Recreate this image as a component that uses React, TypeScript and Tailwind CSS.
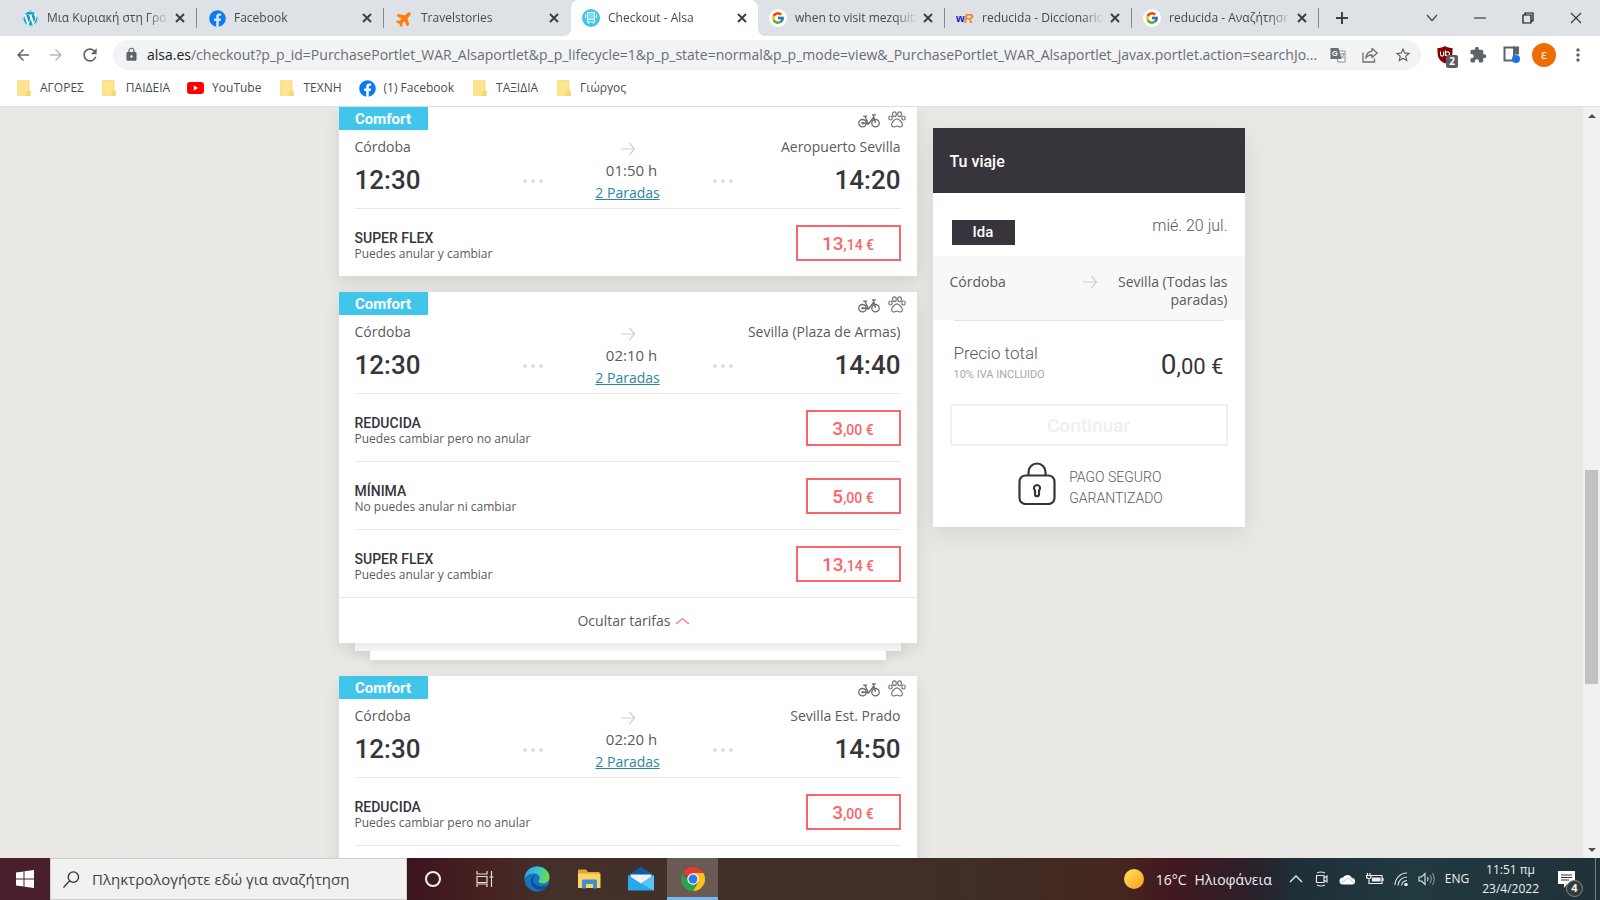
/**
 * App.tsx
 * Desktop view of the ALSA checkout: browser chrome on top, the list of
 * journeys with the trip summary in the middle, Windows taskbar below.
 */

import { useState, type ReactNode } from 'react';
import { FcGoogle } from 'react-icons/fc';
import { FaFacebook, FaPlane, FaWordpress } from 'react-icons/fa';
import { MdArrowBack, MdArrowForward, MdExtension, MdLock, MdMoreVert, MdRefresh, MdStarOutline } from 'react-icons/md';

interface Fare {
  name: string;
  note: string;
  euros: string;
  cents: string;
}

interface Journey {
  id: string;
  destination: string;
  arrival: string;
  duration: string;
  fares: Fare[];
  footer?: boolean;
}

const REDUCIDA: Fare = { name: 'REDUCIDA', note: 'Puedes cambiar pero no anular', euros: '3', cents: '00' };
const MINIMA: Fare = { name: 'MÍNIMA', note: 'No puedes anular ni cambiar', euros: '5', cents: '00' };
const SUPER_FLEX: Fare = { name: 'SUPER FLEX', note: 'Puedes anular y cambiar', euros: '13', cents: '14' };

const JOURNEYS: Journey[] = [
  { id: 'a', destination: 'Aeropuerto Sevilla', arrival: '14:20', duration: '01:50 h', fares: [SUPER_FLEX] },
  {
    id: 'b',
    destination: 'Sevilla (Plaza de Armas)',
    arrival: '14:40',
    duration: '02:10 h',
    fares: [REDUCIDA, MINIMA, SUPER_FLEX],
    footer: true,
  },
  {
    id: 'c',
    destination: 'Sevilla Est. Prado',
    arrival: '14:50',
    duration: '02:20 h',
    fares: [REDUCIDA, MINIMA, SUPER_FLEX],
    footer: true,
  },
];

/* ---------- Small drawings ---------- */

function Cross() {
  return (
    <svg viewBox="0 0 10 10" className="size-[10px]" stroke="#3c4043" strokeWidth="2">
      <path d="M1 1l8 8M9 1L1 9" />
    </svg>
  );
}

function ThinArrow() {
  return (
    <svg viewBox="0 0 16 14" className="h-[14px] w-4" fill="none" stroke="#cfcfcf" strokeWidth="1.2">
      <path d="M1 7h13.5M9.5 1l5 6-5 6" />
    </svg>
  );
}

function BusIcon() {
  return (
    <svg viewBox="0 0 18 18" className="size-[18px]">
      <circle cx="9" cy="9" r="9" fill="#3fc6ea" />
      <path d="M5.500 3.500h7v7h-7z" fill="#7fd9f1" />
      <path d="M5.500 3.500h7v9.500h-7zM5.500 10.500h7M6.500 13v2M11.500 13v2M3.500 5.500V9M14.500 5.500V9" fill="none" stroke="#e4f8fd" strokeWidth="1.100" />
    </svg>
  );
}

function WordReferenceIcon() {
  return (
    <svg viewBox="0 0 18 18" className="size-[18px]" fontFamily="Liberation Sans" fontWeight="bold">
      <text x="0" y="13" fontSize="11" fill="#1414dc">w</text>
      <text x="8" y="14" fontSize="13" fontStyle="italic" fill="#f08a1d">R</text>
    </svg>
  );
}

function FolderIcon() {
  return (
    <svg viewBox="0 0 14 16" className="h-4 w-[14px]">
      <path d="M1 .5h11v15H1a1 1 0 0 1-1-1v-13a1 1 0 0 1 1-1z" fill="#ffe48f" stroke="#f3d26c" strokeWidth=".6" />
      <path d="M11 10.500c2 0 2.500.8 2.500 2.500v2.500H10v-4z" fill="#ffdc72" stroke="#eec65c" strokeWidth=".6" />
    </svg>
  );
}

function YoutubeIcon() {
  return (
    <svg viewBox="0 0 17 12" className="h-3 w-[17px]">
      <rect width="17" height="12" rx="3" fill="#f00" />
      <path d="M6.800 3.500v5l4.300-2.500z" fill="#fff" />
    </svg>
  );
}

function BikeIcon() {
  return (
    <svg viewBox="0 0 22 14" className="h-[14px] w-[22px]" fill="none" stroke="#6d6a6f" strokeWidth="1.300">
      <circle cx="4.500" cy="9.200" r="3.700" />
      <circle cx="17.500" cy="9.200" r="3.700" />
      <circle cx="4.500" cy="9.200" r=".6" />
      <path d="M5 9l5.500 1L15.500 3.500M10.500 10L7 2.500M5.200 2.200h4M14 .8h4M15.200 .8L17.500 9M8 5.500l2.500 4.500" />
    </svg>
  );
}

function PawIcon() {
  return (
    <svg viewBox="0 0 18 17" className="h-[17px] w-[18px]" fill="none" stroke="#7a777c" strokeWidth="1.200">
      <ellipse cx="6.400" cy="3.200" rx="1.900" ry="2.400" />
      <ellipse cx="11.600" cy="3.200" rx="1.900" ry="2.400" />
      <ellipse cx="2.500" cy="7" rx="1.700" ry="2" />
      <ellipse cx="15.500" cy="7" rx="1.700" ry="2" />
      <path d="M9 7.800c-2.600 0-3.200 2-4.400 3.300C3 12.800 3.300 15.800 5.600 16c1.400.1 2-.9 3.400-.9s2 1 3.400.9c2.300-.2 2.600-3.200 1-4.900C12.200 9.800 11.600 7.800 9 7.800z" />
    </svg>
  );
}

function PadlockIcon() {
  return (
    <svg viewBox="0 0 38 43" className="h-[43px] w-[38px]" fill="none" stroke="#38343b" strokeWidth="2.200">
      <rect x="1.500" y="13.500" width="35" height="28.500" rx="6" />
      <path d="M10.500 13.500V10a8.500 8.500 0 0 1 17 0v3.500" />
      <path d="M19 23a3.200 3.200 0 0 0-2 5.600v3.600a2 2 0 0 0 4 0v-3.600a3.200 3.200 0 0 0-2-5.600z" />
    </svg>
  );
}

function TranslateIcon() {
  return (
    <svg viewBox="0 0 16 16" className="size-4">
      <path d="M6 4h9v11H8z" fill="#fff" stroke="#8b8e92" />
      <path d="M.5 1h8l3 11h-11z" fill="#6b6e72" />
      <text x="2" y="9" fontSize="7.500" fontWeight="bold" fill="#fff" fontFamily="Liberation Sans">G</text>
      <path d="M9.500 7h5M12 6v1M10.500 11.500c2-1 3-2.500 3.200-4.500M11 8.500l3 3" fill="none" stroke="#777" strokeWidth=".8" />
    </svg>
  );
}

function ShareIcon() {
  return (
    <svg viewBox="0 0 16 16" className="size-4" fill="none" stroke="#6b6e72" strokeWidth="1.300">
      <path d="M1 5.500V15h11.500v-3.500" />
      <path d="M10 1.500l5.200 4.500L10 10.500V8C7 8 5 9 3.800 11.200 4.200 7.500 6 4.600 10 4.100z" strokeLinejoin="round" />
    </svg>
  );
}

/* ---------- Browser chrome ---------- */

interface TabProps {
  icon: ReactNode;
  title: string;
  active?: boolean;
  separator?: boolean;
}

function Tab({ icon, title, active, separator }: TabProps) {
  return (
    <div
      className={
        active
          ? 'relative flex h-9 w-[187px] min-w-0 items-center rounded-t-lg bg-white pr-[6px] pl-[11px] before:absolute before:bottom-0 before:-left-2 before:size-2 before:bg-[radial-gradient(circle_at_0_0,transparent_8px,white_8px)] after:absolute after:-right-2 after:bottom-0 after:size-2 after:bg-[radial-gradient(circle_at_100%_0,transparent_8px,white_8px)]'
          : 'flex h-9 w-[187px] min-w-0 items-center pl-[11px]'
      }
    >
      <button className="flex min-w-0 flex-1 items-center gap-2 text-left">
        <span className="flex w-[18px] shrink-0 justify-center">{icon}</span>
        <span className="flex-1 overflow-hidden [mask-image:linear-gradient(to_right,black_100px,transparent_122px)] text-[12px] whitespace-nowrap text-[#45494d]">
          {title}
        </span>
      </button>
      <button aria-label="Close tab" className="flex w-5 shrink-0 justify-center">
        <Cross />
      </button>
      {!active && <span className={separator ? 'ml-[6px] h-5 w-px bg-[#85888c]' : 'ml-[6px] h-5 w-px'} />}
    </div>
  );
}

function TabStrip() {
  const google = (
    <span className="flex size-[18px] items-center justify-center rounded-full bg-white">
      <FcGoogle className="size-[14px]" />
    </span>
  );

  return (
    <div className="flex h-9 items-center bg-[#dee1e6] pl-[10px]">
      <Tab icon={<FaWordpress className="size-[17px] rounded-full bg-white text-[#1e9bc9]" />} title="Μια Κυριακή στη Γρα" separator />
      <Tab icon={<FaFacebook className="size-[17px] text-[#0b7cf0]" />} title="Facebook" separator />
      <Tab icon={<FaPlane className="size-[17px] -rotate-45 text-[#ff7a0f]" />} title="Travelstories" />
      <Tab icon={<BusIcon />} title="Checkout - Alsa" active />
      <Tab icon={google} title="when to visit mezquita" separator />
      <Tab icon={<WordReferenceIcon />} title="reducida - Diccionario" separator />
      <Tab icon={google} title="reducida - Αναζήτησr" separator />
      <button aria-label="New tab" className="ml-4">
        <svg viewBox="0 0 14 14" className="size-[14px]" stroke="#3c4043" strokeWidth="2">
          <path d="M7 1v12M1 7h12" />
        </svg>
      </button>
      <div className="ml-auto flex h-8 items-center">
        <button aria-label="Search tabs" className="flex w-12 justify-center">
          <svg viewBox="0 0 12 8" className="h-2 w-3" fill="none" stroke="#444" strokeWidth="1.200"><path d="M1 1l5 5.500L11 1" /></svg>
        </button>
        <button aria-label="Minimize" className="flex w-12 justify-center">
          <svg viewBox="0 0 12 2" className="h-[2px] w-3"><path d="M0 1h12" stroke="#222" /></svg>
        </button>
        <button aria-label="Restore" className="flex w-12 justify-center">
          <svg viewBox="0 0 12 12" className="size-3" fill="none" stroke="#111" strokeWidth="1.200"><path d="M1 3h8v8H1zM3 3V1h8v8H9" /></svg>
        </button>
        <button aria-label="Close window" className="flex w-12 justify-center">
          <svg viewBox="0 0 12 12" className="size-3" stroke="#333" strokeWidth="1.100"><path d="M1 1l10 10M11 1L1 11" /></svg>
        </button>
      </div>
    </div>
  );
}

function Toolbar() {
  return (
    <div className="flex h-[37px] items-center bg-white pr-3 pl-[14px] text-[#5f6368]">
      <button aria-label="Back" className="flex w-[33px]"><MdArrowBack className="size-[18px]" /></button>
      <button aria-label="Forward" className="flex w-[33px] text-[#b8bbbe]"><MdArrowForward className="size-[18px]" /></button>
      <button aria-label="Reload" className="flex w-[33px]"><MdRefresh className="size-5" /></button>
      <div className="flex h-[30px] flex-1 items-center rounded-full bg-[#f1f3f4] pr-[9px] pl-[11px]">
        <MdLock className="size-[15px]" />
        <label htmlFor="url" className="ml-2 text-[14px] text-[#202124]">alsa.es</label>
        <input
          id="url"
          readOnly
          className="min-w-0 flex-1 bg-transparent text-[14px] text-[#6a6e73] outline-none"
          value="/checkout?p_p_id=PurchasePortlet_WAR_Alsaportlet&p_p_lifecycle=1&p_p_state=normal&p_p_mode=view&_PurchasePortlet_WAR_Alsaportlet_javax.portlet.action=searchJo..."
        />
        <div className="ml-1 flex items-center gap-4">
          <button aria-label="Translate"><TranslateIcon /></button>
          <button aria-label="Share"><ShareIcon /></button>
          <button aria-label="Bookmark"><MdStarOutline className="size-[18px]" /></button>
        </div>
      </div>
      <div className="flex items-center">
        <button aria-label="uBlock" className="relative ml-4 flex">
          <svg viewBox="0 0 16 18" className="h-[18px] w-4">
            <path d="M8 0c2 1.500 5 2 7.500 2 0 7 .5 11.500-7.500 15.500C0 13.500.5 9 .5 2 3 2 6 1.500 8 0z" fill="#800000" />
            <path d="M3.500 5.500v3a1.600 1.600 0 0 0 3.200 0v-3M8.500 4.500v5.600M12.500 7.800a2 2 0 1 1-4 0 2 2 0 0 1 4 0z" fill="none" stroke="#fff" strokeWidth="1.100" />
          </svg>
          <span className="absolute top-[9px] left-[9px] flex h-[13px] w-3 items-center justify-center rounded-xs bg-[#5b5e61] text-[10px] font-bold text-white">2</span>
        </button>
        <button aria-label="Extensions" className="ml-4"><MdExtension className="size-[18px]" /></button>
        <button aria-label="Side panel" className="ml-4">
          <svg viewBox="0 0 17 17" className="size-[17px]">
            <path d="M1.500 1.500h9.500v13H1.500z" fill="none" stroke="#5f6368" strokeWidth="2" />
            <path d="M10 .5h6v8h-6z" fill="#5f6368" />
            <circle cx="13" cy="13" r="4" fill="#1a73e8" />
          </svg>
        </button>
        <button className="ml-3 flex size-6 items-center justify-center rounded-full bg-[#ef6c00] text-[13px] text-white">ε</button>
        <button aria-label="Menu" className="ml-3"><MdMoreVert className="size-5" /></button>
      </div>
    </div>
  );
}

function Bookmark({ icon, label }: { icon: ReactNode; label: string }) {
  return (
    <a href="#" className="flex items-center gap-2 text-[12px] whitespace-nowrap text-[#4a4d51]">
      <span className="flex w-[17px] justify-center">{icon}</span>
      {label}
    </a>
  );
}

function BookmarksBar() {
  return (
    <nav className="flex h-[34px] items-center gap-[17px] border-b border-[#dfe0e2] bg-white pb-[3px] pl-[15px]">
      <Bookmark icon={<FolderIcon />} label="ΑΓΟΡΕΣ" />
      <Bookmark icon={<FolderIcon />} label="ΠΑΙΔΕΙΑ" />
      <Bookmark icon={<YoutubeIcon />} label="YouTube" />
      <Bookmark icon={<FolderIcon />} label="ΤΕΧΝΗ" />
      <Bookmark icon={<FaFacebook className="size-[17px] text-[#0b7cf0]" />} label="(1) Facebook" />
      <Bookmark icon={<FolderIcon />} label="ΤΑΞΙΔΙΑ" />
      <Bookmark icon={<FolderIcon />} label="Γιώργος" />
    </nav>
  );
}

/* ---------- Journeys ---------- */

function Dots() {
  return (
    <div className="flex justify-center gap-1 pt-[41px]">
      <span className="size-1 rounded-full bg-[#deded9]" />
      <span className="size-1 rounded-full bg-[#deded9]" />
      <span className="size-1 rounded-full bg-[#deded9]" />
    </div>
  );
}

function FareRow({ fare }: { fare: Fare }) {
  return (
    <li className="mx-4 flex h-[68px] items-center justify-between border-t border-[#e9e9e9]">
      <div className="pt-[6px]">
        <p className="font-[Roboto] text-[14px] leading-4 font-medium text-[#38343b]">{fare.name}</p>
        <p className="text-[12px] leading-4 text-[#5c5a5e]">{fare.note}</p>
      </div>
      <button
        className={
          fare.euros.length > 1
            ? 'h-9 w-[105px] border-2 border-[#f9656a] pt-1 font-[Roboto] font-medium text-[#f9656a]'
            : 'h-9 w-[95px] border-2 border-[#f9656a] pt-1 font-[Roboto] font-medium text-[#f9656a]'
        }
      >
        <span className="text-[19px] leading-6">{fare.euros}</span>
        <span className="text-[14px] leading-6">,{fare.cents} €</span>
      </button>
    </li>
  );
}

function JourneyCard({ journey }: { journey: Journey }) {
  const [open, setOpen] = useState(true);

  return (
    <article>
      <div className="relative z-20 bg-white shadow-[0_6px_16px_rgba(0,0,0,0.10)]">
        <div className="flex h-[23px] items-start justify-between pr-[11px]">
          <span className="flex h-[23px] w-[89px] items-center justify-center bg-[#3fc6ea] pt-[2px] font-[Roboto] text-[15px] font-bold text-white">
            Comfort
          </span>
          <span className="flex items-end gap-2 pt-1">
            <BikeIcon />
            <PawIcon />
          </span>
        </div>
        <div className="mx-4 grid h-[78px] grid-cols-[1fr_24px_166px_24px_1fr] pt-2 whitespace-nowrap text-[#5c5a5e]">
          <div>
            <p className="text-[14px] leading-[18px]">Córdoba</p>
            <p className="pt-2 font-[Roboto] text-[26px] leading-8 font-medium text-[#38343b]">12:30</p>
          </div>
          <Dots />
          <div className="flex flex-col items-center pt-1">
            <ThinArrow />
            <span className="pt-1 pl-2 text-[15px] leading-5">{journey.duration}</span>
            <a href="#" className="pt-[3px] text-[14px] leading-5 text-[#2b86a5] underline">2 Paradas</a>
          </div>
          <Dots />
          <div className="flex flex-col items-end">
            <p className="text-[14px] leading-[18px]">{journey.destination}</p>
            <p className="pt-2 font-[Roboto] text-[26px] leading-8 font-medium text-[#38343b]">{journey.arrival}</p>
          </div>
        </div>
        {open && (
          <ul>
            {journey.fares.map((fare) => (
              <FareRow key={fare.name} fare={fare} />
            ))}
          </ul>
        )}
        {journey.footer && (
          <button
            className="flex h-[46px] w-full items-center justify-center gap-1 border-t border-[#ececec] pl-3 text-[14px] text-[#5c5a5e]"
            onClick={() => setOpen(!open)}
          >
            {open ? 'Ocultar tarifas' : 'Ver tarifas'}
            <svg viewBox="0 0 15 8" className="h-2 w-[15px]" fill="none" stroke="#f9797d" strokeWidth="1.300">
              <path d="M1 7l6.500-5.500L14 7" />
            </svg>
          </button>
        )}
      </div>
      {/* Sheets peeking out below a card that has more fares */}
      {journey.footer && (
        <>
          <div className="relative z-10 mx-4 h-2 bg-white shadow-[0_4px_12px_rgba(0,0,0,0.10)]" />
          <div className="relative z-30 mx-[31px] h-[9px] bg-white shadow-[0_5px_8px_rgba(0,0,0,0.06)]" />
        </>
      )}
    </article>
  );
}

function TripSummary() {
  return (
    <aside className="mt-[21px] w-[312px] shrink-0 self-start bg-white text-[#5c5a5e] shadow-[0_8px_24px_rgba(0,0,0,0.08)]">
      <h2 className="flex h-[65px] items-center bg-[#38343b] pt-[2px] pl-[17px] font-[Roboto] text-[16px] font-medium text-white">Tu viaje</h2>
      <div className="flex h-[63px] justify-between pt-[21px] pr-[17px] pl-[19px] font-[Roboto]">
        <span className="mt-[6px] flex h-[25px] w-[63px] items-center justify-center bg-[#38343b] text-[15px] font-medium text-white">Ida</span>
        <span className="text-[16px] leading-6 font-light">mié. 20 jul.</span>
      </div>
      <div className="flex h-16 items-start bg-[#f8f8f8] px-[17px] pt-[17px] text-[14px] leading-[18px]">
        <span className="w-[132px]">Córdoba</span>
        <span className="pt-[2px]"><ThinArrow /></span>
        <span className="flex-1 pl-2 text-right">Sevilla (Todas las paradas)</span>
      </div>
      <div className="mx-[21px] flex h-[84px] justify-between border-t border-[#e6e6e6] font-[Roboto]">
        <div className="pt-5">
          <p className="text-[17px] leading-6 font-light">Precio total</p>
          <p className="pt-[2px] text-[11px] leading-4 text-[#a9a8aa]">10% IVA INCLUIDO</p>
        </div>
        <p className="pt-[28px] text-[#38343b]">
          <span className="text-[28px] leading-8">0</span>
          <span className="text-[22px] leading-8">,00 €</span>
        </p>
      </div>
      <div className="px-[17px]">
        <button disabled className="h-[42px] w-full border-2 border-[#f0f0f0] pt-[2px] font-[Roboto] text-[19px] font-medium text-[#efefef]">
          Continuar
        </button>
      </div>
      <div className="flex h-[81px] items-start justify-center gap-[13px] pt-4 pl-1 font-[Roboto] text-[14px] leading-[21px] font-light">
        <PadlockIcon />
        <p className="pt-[5px]">
          PAGO SEGURO
          <br />
          GARANTIZADO
        </p>
      </div>
    </aside>
  );
}

function ScrollBar() {
  return (
    <div className="flex w-[17px] shrink-0 flex-col bg-[#f1f1f1]">
      <button aria-label="Scroll up" className="flex h-[17px] items-center justify-center">
        <svg viewBox="0 0 8 4" className="h-1 w-2" fill="#505050"><path d="M0 4l4-4 4 4z" /></svg>
      </button>
      <div className="flex-[346]" />
      <div className="mx-[2px] flex-[214] bg-[#c1c1c1]" />
      <div className="flex-[157]" />
      <button aria-label="Scroll down" className="flex h-[17px] items-center justify-center">
        <svg viewBox="0 0 8 4" className="h-1 w-2" fill="#505050"><path d="M0 0l4 4 4-4z" /></svg>
      </button>
    </div>
  );
}

/* ---------- Taskbar ---------- */

function EdgeIcon() {
  return (
    <svg viewBox="0 0 26 26" className="size-[26px]">
      <defs>
        <linearGradient id="edge-top" x1="0" x2="1" y1="0" y2=".3">
          <stop offset="0" stopColor="#2a9fe0" />
          <stop offset=".5" stopColor="#35c1d8" />
          <stop offset="1" stopColor="#66dd52" />
        </linearGradient>
      </defs>
      <circle cx="13" cy="13" r="12.500" fill="#1673c4" />
      <path d="M.5 13C.5 5.500 6 .5 13 .5S25.500 5.500 25.500 11c0 4-3 6.500-6.500 6.500-3 0-4.500-1.200-4.500-2.200 0-.8 1.200-1.200 1.200-3.300C15.700 9 13 7.500 9.800 7.500 5 7.500.8 10 .5 13z" fill="url(#edge-top)" />
      <path d="M9 14.500C9 12 10 10 12 9c-6 0-8 10 1 14.500 4 1.800 8-.5 10.500-4.500-6 3-14.500 1-14.500-4.500z" fill="#0b4f96" />
    </svg>
  );
}

function ExplorerIcon() {
  return (
    <svg viewBox="0 0 24 20" className="h-5 w-6">
      <path d="M1 1.500A1 1 0 0 1 2 .5h7l2 2.500h11.500v6H1z" fill="#e5a72b" />
      <path d="M1 4.500h22.500V19H1z" fill="#fcd462" />
      <path d="M5 19.500V12a1.500 1.500 0 0 1 1.500-1.500h12A1.500 1.500 0 0 1 20 12v7.500h-4V15H9v4.500z" fill="#3d8fd1" />
    </svg>
  );
}

function MailIcon() {
  return (
    <svg viewBox="0 0 26 24" className="h-6 w-[26px]">
      <path d="M0 8l13-8 13 8v4H0z" fill="#0f5ba8" />
      <path d="M2.500 7.500h21V18h-21z" fill="#f2f2f2" />
      <path d="M0 8l13 8.500L26 8v15.500H0z" fill="#29a9ea" />
      <path d="M26 8v15.500L13 16.500z" fill="#58c4f4" />
    </svg>
  );
}

function ChromeIcon() {
  return (
    <svg viewBox="0 0 24 24" className="size-6">
      <path d="M12 12L1.600 6A12 12 0 0 1 22.400 6H12z" fill="#e33b2e" />
      <path d="M12 12l5.200 3L12 24A12 12 0 0 0 22.400 6H12z" fill="#fbc116" />
      <path d="M1.600 6A12 12 0 0 0 12 24l5.200-9L12 12 6.800 15z" fill="#2ba24c" />
      <circle cx="12" cy="12" r="5.800" fill="#fff" />
      <circle cx="12" cy="12" r="4.500" fill="#3478e5" />
    </svg>
  );
}

function TaskbarButton({ label, children, active }: { label: string; children: ReactNode; active?: boolean }) {
  return (
    <button
      aria-label={label}
      className={
        active
          ? 'flex h-full w-[51px] items-center justify-center border-b-3 border-[#76b9ed] bg-[#6a5a54] pt-[3px]'
          : 'flex h-full w-[52px] items-center justify-center'
      }
    >
      {children}
    </button>
  );
}

function Taskbar() {
  return (
    <footer className="flex h-[42px] shrink-0 items-center bg-[linear-gradient(90deg,#3b131f_25%,#47201f_30%,#43302a_34%,#3f2e28_60%,#45271f_70%,#431820_73%,#2b1f28_78%,#1f2f37_81%,#213a3f_88%,#1f3238_100%)] text-[#f0f0f0]">
      <button aria-label="Start" className="flex h-full w-[50px] items-center justify-center bg-[#4a1f2c]">
        <svg viewBox="0 0 18 18" className="size-[18px]" fill="#fff">
          <path d="M0 2.500l7.500-1v7H0zM8.500 1.300L18 0v8.500H8.500zM0 9.500h7.500v7L0 15.500zM8.500 9.500H18V18l-9.500-1.300z" />
        </svg>
      </button>
      <div className="flex h-full w-[357px] items-center gap-3 border border-[#cfcfcf] bg-[#f1f1f1] pl-3">
        <svg viewBox="0 0 18 18" className="size-[17px] shrink-0" fill="none" stroke="#333" strokeWidth="1.400">
          <circle cx="11" cy="6.500" r="5.500" />
          <path d="M7 10.500l-6.500 7" />
        </svg>
        <input
          aria-label="Search"
          placeholder="Πληκτρολογήστε εδώ για αναζήτηση"
          className="min-w-0 flex-1 bg-transparent text-[15px] outline-none placeholder:text-[#444]"
        />
      </div>
      <TaskbarButton label="Cortana">
        <svg viewBox="0 0 16 16" className="size-4" fill="none" stroke="#f4f0f0" strokeWidth="2"><circle cx="8" cy="8" r="7" /></svg>
      </TaskbarButton>
      <TaskbarButton label="Task view">
        <svg viewBox="0 0 18 16" className="h-4 w-[18px]" fill="none" stroke="#e6dcdc" strokeWidth="1.200">
          <path d="M1 0v3h10V0M1 5.500h10v6H1zM1 16v-3h10v3M15.500 0v16M13.500 6h4" />
        </svg>
      </TaskbarButton>
      <TaskbarButton label="Edge"><EdgeIcon /></TaskbarButton>
      <TaskbarButton label="File Explorer"><ExplorerIcon /></TaskbarButton>
      <TaskbarButton label="Mail"><MailIcon /></TaskbarButton>
      <TaskbarButton label="Chrome" active><ChromeIcon /></TaskbarButton>

      <div className="ml-auto flex h-full items-center">
        <span className="size-5 rounded-full bg-linear-to-br from-[#ffe45c] to-[#ff9a0a]" />
        <span className="ml-3 text-[14px] whitespace-nowrap">16°C</span>
        <span className="ml-2 text-[14px] whitespace-nowrap">Ηλιοφάνεια</span>
        <div className="ml-[17px] flex items-center gap-[10px]">
          <svg viewBox="0 0 14 8" className="mr-[2px] h-2 w-[14px]" fill="none" stroke="#eee" strokeWidth="1.300"><path d="M1 7l6-6 6 6" /></svg>
          <svg viewBox="0 0 14 16" className="h-4 w-[14px]" fill="none" stroke="#e4e4e4" strokeWidth="1.200">
            <path d="M1.500 4.500h7.500v7H1.500zM9 7l3-2v6l-3-2M2 2q4-2 8 0M2 14q4 2 8 0" />
          </svg>
          <svg viewBox="0 0 17 11" className="h-[11px] w-[17px]">
            <path d="M4 10.500a3.500 3.500 0 0 1 0-7A5 5 0 0 1 13 4a3.300 3.300 0 0 1 .5 6.500z" fill="#fff" />
            <path d="M1.500 9l8-5 6 5.500" fill="none" stroke="#bcc6c9" />
          </svg>
          <svg viewBox="0 0 18 12" className="h-3 w-[18px]" fill="none" stroke="#eee" strokeWidth="1.200">
            <path d="M5 2.500h11v8H3V7M17 5v3M1.500 0v2M4 0v2M.5 2.500h4.500v2L3 6 .5 4.500z" />
            <path d="M6.500 5h7.500v3H6.500z" fill="#eee" />
          </svg>
          <svg viewBox="0 0 14 14" className="size-[14px]" fill="none" stroke="#dfe5e6" strokeWidth="1.100">
            <path d="M1 13A12 12 0 0 1 13 1M4 13.500a9 9 0 0 1 9-8.500M7.500 13.500A6 6 0 0 1 13 8.500" />
            <circle cx="12" cy="12.500" r="1.200" fill="#fff" />
          </svg>
          <svg viewBox="0 0 17 14" className="h-[14px] w-[17px]" fill="none" stroke="#dfe5e6" strokeWidth="1.100">
            <path d="M1 5h2.500L7 1.500v11L3.500 9H1zM9.500 5q1 2 0 4" />
            <path d="M12 3q2.500 4 0 8M14.500 1q3.500 6 0 12" stroke="#8b989b" />
          </svg>
        </div>
        <span className="ml-[10px] text-[12px]">ENG</span>
        <time className="ml-[13px] text-center text-[12px] leading-[19px] whitespace-nowrap">
          11:51 πμ
          <br />
          23/4/2022
        </time>
        <button aria-label="Notifications" className="relative mr-[12px] ml-[19px] flex h-full w-[25px] items-center">
          <svg viewBox="0 0 18 17" className="h-[17px] w-[18px]">
            <path d="M0 0h17v13H9l-3 4v-4H0z" fill="#fff" />
            <path d="M3 4h11M3 6.500h11M3 9h8" stroke="#26383d" />
          </svg>
          <span className="absolute top-[22px] left-2 flex size-[17px] items-center justify-center rounded-full border border-[#888] bg-[#333a3d] text-[11px] font-bold">4</span>
        </button>
        <span className="mr-1 h-full w-px bg-[#718084]" />
      </div>
    </footer>
  );
}

export default function App() {
  return (
    <div className="flex h-screen flex-col overflow-hidden font-['Open_Sans',sans-serif]">
      <header className="shrink-0">
        <TabStrip />
        <Toolbar />
        <BookmarksBar />
      </header>
      <div className="flex min-h-0 flex-1 bg-[#e9e8e4]">
        <main className="flex min-w-0 flex-1 items-start justify-center gap-4 overflow-hidden">
          <section className="flex w-[578px] flex-col gap-4">
            {JOURNEYS.map((journey) => (
              <JourneyCard key={journey.id} journey={journey} />
            ))}
          </section>
          <TripSummary />
        </main>
        <ScrollBar />
      </div>
      <Taskbar />
    </div>
  );
}
